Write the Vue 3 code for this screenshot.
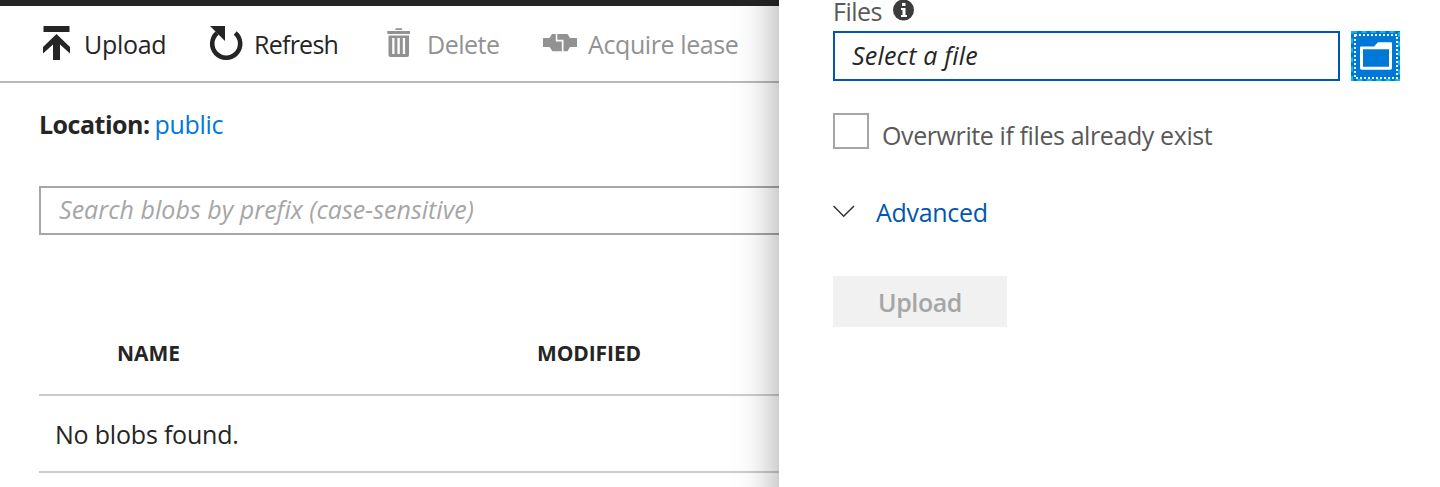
<script setup>
const columns = ['NAME', 'MODIFIED']
</script>

<template>
  <div class="page">
    <main class="blobs">
      <nav class="toolbar">
        <button class="tool upload">
          <svg width="28" height="36" viewBox="0 0 28 36">
            <path d="M.5 1H26.500V7H.5ZM13.500 9L27 22V28.500L17 19.500V35H10V19.500L0 28.500V22Z" />
          </svg>
          <span>Upload</span>
        </button>
        <button class="tool refresh">
          <svg width="34" height="36" viewBox="0 0 34 36">
            <path d="M1 1H16V16Z" />
            <path class="ring" d="M8.200 8A14 14 0 1 0 26.200 8" />
          </svg>
          <span>Refresh</span>
        </button>
        <button class="tool delete disabled">
          <svg width="24" height="30" viewBox="0 0 24 30">
            <path fill-rule="evenodd" d="M9 .3H14.500L15.500 2H8ZM.3 3H23V6H.3ZM1.500 7.500H22V27Q22 29 20 29H3.500Q1.500 29 1.500 27ZM5.200 10V26H7.500V10ZM10.400 10V26H12.800V10ZM15.800 10V26H18.100V10Z" />
          </svg>
          <span>Delete</span>
        </button>
        <button class="tool lease disabled">
          <svg width="34" height="20" viewBox="0 0 34 20">
            <path d="M0 5H6.500L9 1H12.800V8.500H18.800V18.300H9.500L6.500 14H0ZM14.300 1H24.500L27 5H34V14H27L24.500 18.300H20.500V6.800H14.300Z" />
          </svg>
          <span>Acquire lease</span>
        </button>
      </nav>
      <p class="location"><b>Location:</b><a>public</a></p>
      <div class="search"><span>Search blobs by prefix (case-sensitive)</span></div>
      <div class="table">
        <div class="head">
          <span v-for="name in columns" :key="name" :class="name.toLowerCase()">{{ name }}</span>
        </div>
        <div class="row"><span>No blobs found.</span></div>
      </div>
    </main>
    <aside class="panel">
      <div class="label">
        <span>Files</span>
        <svg width="22" height="22" viewBox="0 0 22 22">
          <circle cx="10.500" cy="10" r="10.500" fill="#3c3c3c" />
          <path d="M9 3H12.500V6H9ZM8 8H12.500V15H14V17H8V15H9.500V10H8Z" fill="#fff" />
        </svg>
      </div>
      <div class="picker">
        <div class="file"><span>Select a file</span></div>
        <button class="browse">
          <svg width="49" height="50" viewBox="0 0 49 50">
            <rect width="49" height="50" fill="#0078d7" />
            <rect x="1" y="1" width="47" height="48" fill="none" stroke="#00bcf2" stroke-width="2" stroke-dasharray="5 4.400" />
            <rect x="4" y="4" width="42" height="43" fill="none" stroke="#fff" stroke-width="2" stroke-dasharray="2 2" />
            <path fill="#fff" fill-rule="evenodd" d="M10 15.500H23L27 11.300H40Q41 11.300 41 12.300V37Q41 38.700 39 38.700H11Q9 38.700 9 37V16.500Q9 15.500 10 15.500ZM12 18.300V35.700H38V18.300Z" />
          </svg>
        </button>
      </div>
      <label class="overwrite"><i></i><span>Overwrite if files already exist</span></label>
      <div class="advanced">
        <svg width="22" height="13" viewBox="0 0 22 13">
          <path d="M.5 1L10.700 11.200L21 1" fill="none" stroke="#333" stroke-width="1.500" />
        </svg>
        <span>Advanced</span>
      </div>
      <button class="submit"><span>Upload</span></button>
    </aside>
  </div>
</template>

<style>
body { background: #fff; }
</style>

<style scoped>
.page {
  display: flex;
  height: 487px;
  overflow: hidden;
  font: 25px/36px "Open Sans", "Noto Sans", sans-serif;
  color: #252525;
  white-space: nowrap;
}
button {
  font: inherit;
  color: inherit;
  border: 0;
  padding: 0;
  background: none;
}
svg { display: block; flex: none; }
.blobs { width: 779px; flex: none; overflow: hidden; }
.toolbar {
  display: flex;
  box-sizing: border-box;
  height: 83px;
  border-top: 6px solid #252525;
  border-bottom: 2px solid #bababa;
}
.tool { display: flex; align-items: flex-start; height: 75px; }
.tool svg { fill: #252525; margin-top: 19px; }
.tool span { margin-top: 20px; }
.tool .ring { fill: none; stroke: #252525; stroke-width: 4.6; }
.tool.disabled { color: #929292; }
.tool.disabled svg { fill: #929292; }
.upload { margin-left: 43px; width: 166px; }
.upload span { margin-left: 13px; letter-spacing: -.3px; }
.refresh { width: 178px; }
.refresh span { margin-left: 11px; letter-spacing: -.75px; }
.delete { width: 156px; }
.tool.delete svg { margin-top: 22px; }
.delete span { margin-left: 16px; letter-spacing: -.5px; }
.tool.lease svg { margin-top: 27px; }
.lease span { margin-left: 11px; letter-spacing: -.4px; }
.location { display: flex; margin: 23px 0 0 39px; height: 36px; }
.location b { letter-spacing: -.5px; }
.location a { margin-left: 5px; color: #0078d7; letter-spacing: -.3px; }
.search {
  box-sizing: border-box;
  margin: 44px 0 0 39px;
  width: 760px;
  height: 49px;
  padding: 3px 18px;
  border: 2px solid #a6a6a6;
  color: #a6a6a6;
  font-style: italic;
  letter-spacing: .03px;
}
.table { margin-left: 39px; }
.head {
  display: flex;
  box-sizing: border-box;
  height: 161px;
  padding: 100px 0 0 78px;
  border-bottom: 2px solid #ccc;
  font-size: 21px;
  font-weight: 700;
}
.name { width: 420px; letter-spacing: 0; }
.modified { letter-spacing: -.1px; }
.row {
  box-sizing: border-box;
  height: 77px;
  padding: 20px 0 0 16px;
  border-bottom: 2px solid #ccc;
  letter-spacing: -.2px;
}
.panel {
  position: relative;
  box-sizing: border-box;
  width: 661px;
  padding-left: 54px;
  background: #fff;
  clip-path: inset(0 0 0 -50px);
  color: #595959;
}
/* Taller than the panel, so the shadow keeps its strength at both ends */
.panel::before {
  content: "";
  position: absolute;
  inset: -60px 0;
  z-index: -1;
  box-shadow: 0 0 40px rgba(0, 0, 0, .38);
}
.label { display: flex; height: 31px; line-height: 22px; }
.label span { width: 60px; letter-spacing: -.5px; }
.picker { display: flex; gap: 11px; height: 50px; }
.file {
  box-sizing: border-box;
  width: 507px;
  padding: 4px 17px;
  border: 2px solid #0058ad;
  color: #252525;
  font-style: italic;
  letter-spacing: .2px;
}
.overwrite { display: flex; margin-top: 32px; height: 44px; }
.overwrite i { box-sizing: border-box; width: 36px; height: 36px; border: 2px solid #a6a6a6; }
.overwrite span { margin: 4px 0 0 13px; letter-spacing: -.4px; }
.advanced { display: flex; margin-top: 38px; height: 36px; color: #0058ad; }
.advanced svg { margin-top: 10px; }
.advanced span { margin: -1px 0 0 21px; letter-spacing: -.3px; }
.submit {
  display: block;
  margin-top: 45px;
  width: 174px;
  height: 51px;
  background: #f1f1f1;
  color: #a6a6a6;
  font-weight: 600;
  letter-spacing: -.4px;
}
</style>
